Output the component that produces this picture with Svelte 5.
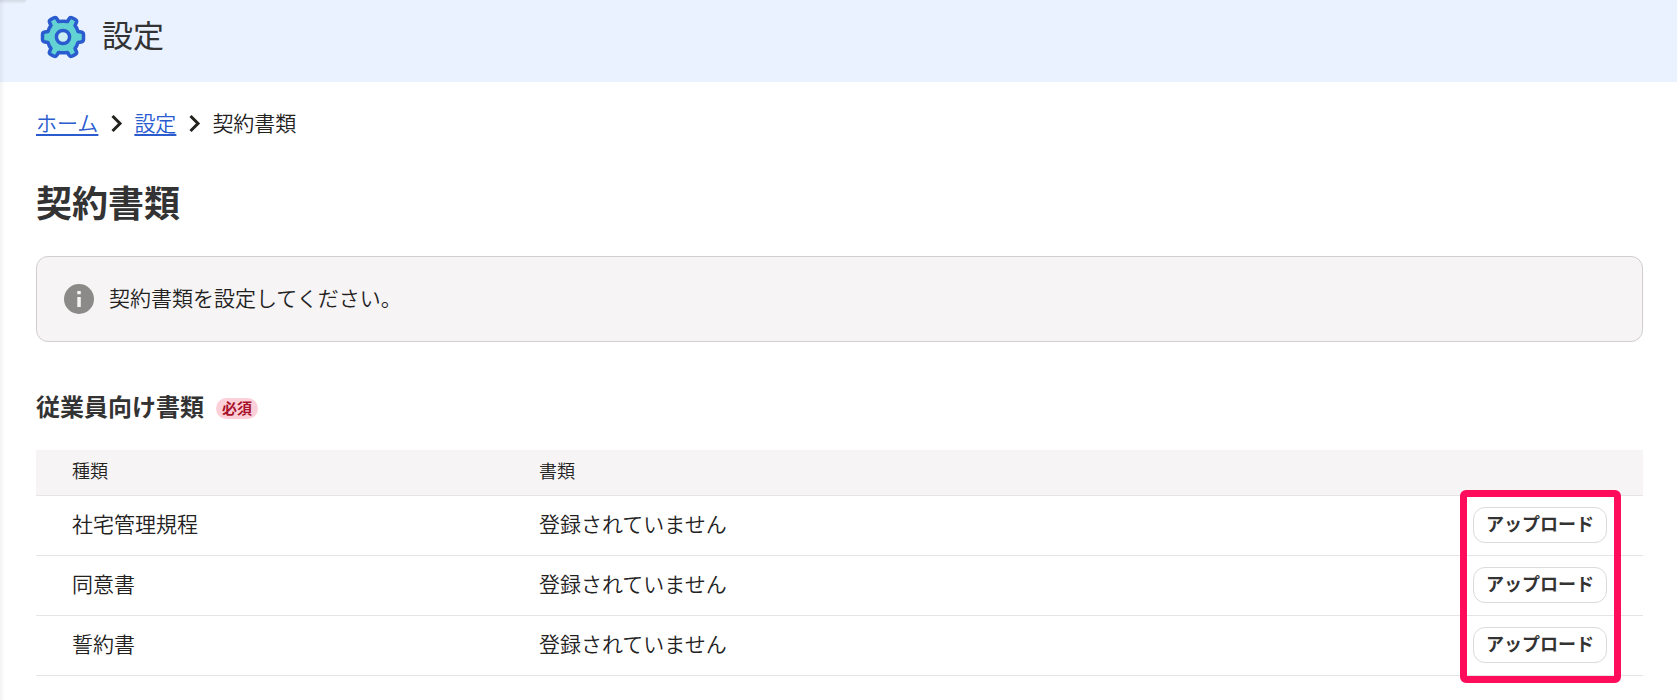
<script>
  const rows = ['社宅管理規程', '同意書', '誓約書'];
  const crumbs = ['ホーム', '設定'];
</script>

<div class="page">
  <header>
    <svg class="gear" viewBox="-24 -24 48 48" aria-hidden="true">
      <path
        d="M-4.5 -15.500 L-6 -18 Q-7 -20 -9 -19.200 L-12.500 -17.400 Q-14.200 -16.300 -13.400 -14.500 L-12 -11.500 Q-13.800 -9.500 -15 -5.500 L-18 -5 Q-20.500 -4.600 -20.500 -2.500 L-20.500 2.500 Q-20.500 4.600 -18 5 L-15 5.500 Q-13.800 9.500 -12 11.500 L-13.400 14.500 Q-14.200 16.300 -12.500 17.400 L-9 19.200 Q-7 20 -6 18 L-4.500 15.500 Q0 16 4.500 15.500 L6 18 Q7 20 9 19.200 L12.500 17.400 Q14.200 16.300 13.400 14.500 L12 11.500 Q13.800 9.500 15 5.500 L18 5 Q20.500 4.600 20.500 2.500 L20.500 -2.500 Q20.500 -4.600 18 -5 L15 -5.500 Q13.800 -9.500 12 -11.500 L13.400 -14.500 Q14.200 -16.300 12.500 -17.400 L9 -19.200 Q7 -20 6 -18 L4.500 -15.500 Q0 -16 -4.500 -15.500 Z"
        fill="#62d2d2" stroke="#2a5cd0" stroke-width="3.500" stroke-linejoin="round"
      />
      <circle r="6.6" fill="#cdeff2" stroke="#2a5cd0" stroke-width="3.500" />
    </svg>
    <span>設定</span>
  </header>

  <main>
    <nav aria-label="breadcrumb">
      {#each crumbs as c}
        <a href="#top">{c}</a>
        <svg class="chev" viewBox="0 0 24 24" aria-hidden="true"><path d="M8.500 6 L16 13.500 L8.500 21" /></svg>
      {/each}
      <span>契約書類</span>
    </nav>

    <h1>契約書類</h1>

    <div class="note">
      <svg viewBox="0 0 30 30" aria-hidden="true">
        <circle cx="15" cy="15" r="15" fill="#8c8a88" />
        <path d="M13.300 7h3.500v3.300h-3.500zM13.300 13h3.500v10h-3.500z" fill="#f6f4f5" />
      </svg>
      <p>契約書類を設定してください。</p>
    </div>

    <section>
      <div class="title">
        <h2>従業員向け書類</h2>
        <span class="badge">必須</span>
      </div>
      <div class="tablebox">
        <table>
          <thead>
            <tr><th class="kind">種類</th><th>書類</th><th class="act"></th></tr>
          </thead>
          <tbody>
            {#each rows as r}
              <tr>
                <td>{r}</td>
                <td>登録されていません</td>
                <td class="act"><button type="button">アップロード</button></td>
              </tr>
            {/each}
          </tbody>
        </table>
        <div class="highlight"></div>
      </div>
    </section>
  </main>
  <div class="edge"></div>
  <div class="corner"></div>
</div>

<style>
  :global(body) {
    margin: 0;
    background: #fff;
  }
  .page {
    position: relative;
    min-height: 100vh;
    overflow: hidden;
    color: #23221e;
    font-family: 'Noto Sans CJK JP', sans-serif;
    font-size: 21px;
    font-weight: 350;
    line-height: 32px;
  }
  header {
    display: flex;
    align-items: center;
    gap: 15px;
    height: 74px;
    padding: 0 36px 8px 39px;
    background: #eaf2ff;
    color: #333;
    font-size: 31px;
    font-weight: 400;
    line-height: 48px;
  }
  header span {
    padding-bottom: 6px;
  }
  .gear {
    width: 48px;
    height: 48px;
  }
  main {
    padding: 24px 34px 24px 36px;
  }
  nav {
    display: flex;
    align-items: center;
    gap: 6px;
  }
  nav a {
    color: #2a5cd0;
    text-decoration: underline;
    text-decoration-thickness: 2px;
    text-underline-offset: 3px;
  }
  .chev {
    width: 24px;
    height: 24px;
    fill: none;
    stroke: #23221e;
    stroke-width: 3;
  }
  h1 {
    margin: 36px 0 28px;
    color: #333;
    font-size: 36px;
    font-weight: 700;
    line-height: 54px;
  }
  .note {
    display: flex;
    align-items: center;
    gap: 15px;
    padding: 24px 27px;
    border: 1px solid #d0ced0;
    border-radius: 12px;
    background: #f6f4f5;
  }
  .note svg {
    width: 30px;
    height: 30px;
  }
  .note p {
    margin: 0;
    padding-bottom: 4px;
  }
  .title {
    display: flex;
    align-items: center;
    gap: 12px;
    margin: 48px 0 24px;
  }
  h2 {
    margin: 0;
    padding-bottom: 4px;
    color: #333;
    font-size: 24px;
    font-weight: 700;
    line-height: 32px;
  }
  .badge {
    padding: 0 6px 2px;
    border-radius: 11px;
    background: #fcd0d8;
    color: #a8122a;
    font-size: 15px;
    font-weight: 700;
    line-height: 19px;
  }
  .tablebox {
    position: relative;
  }
  table {
    width: 100%;
    border-collapse: separate;
    border-spacing: 0;
  }
  th,
  td {
    box-sizing: border-box;
    padding: 0 36px 4px;
    border-bottom: 1px solid #e6e4e6;
    text-align: left;
  }
  th {
    height: 46px;
    background: #f6f4f5;
    font-size: 18px;
    font-weight: 350;
    line-height: 27px;
  }
  td {
    height: 60px;
    padding-bottom: 6px;
  }
  .kind {
    width: 467px;
  }
  .act {
    padding-bottom: 2px;
    text-align: right;
  }
  button {
    display: block;
    height: 36px;
    margin-left: auto;
    padding: 0 12px 4px;
    border: 1px solid #dcdadc;
    border-radius: 12px;
    background: #fff;
    color: #333;
    font-family: inherit;
    font-size: 18px;
    font-weight: 700;
    line-height: 30px;
    white-space: nowrap;
  }
  .highlight {
    position: absolute;
    top: 40px;
    right: 22px;
    bottom: -7px;
    width: 147px;
    border: 7px solid #ff0d5c;
    border-radius: 6px;
    pointer-events: none;
  }
  .edge,
  .corner {
    position: absolute;
    top: 0;
    left: 0;
    pointer-events: none;
  }
  .edge {
    bottom: 0;
    width: 5px;
    background: linear-gradient(to right, rgba(0, 0, 0, 0.05), transparent);
  }
  .corner {
    width: 26px;
    height: 4px;
    border-radius: 0 0 4px 0;
    background: linear-gradient(to bottom, rgba(0, 0, 0, 0.1), transparent);
  }
</style>
